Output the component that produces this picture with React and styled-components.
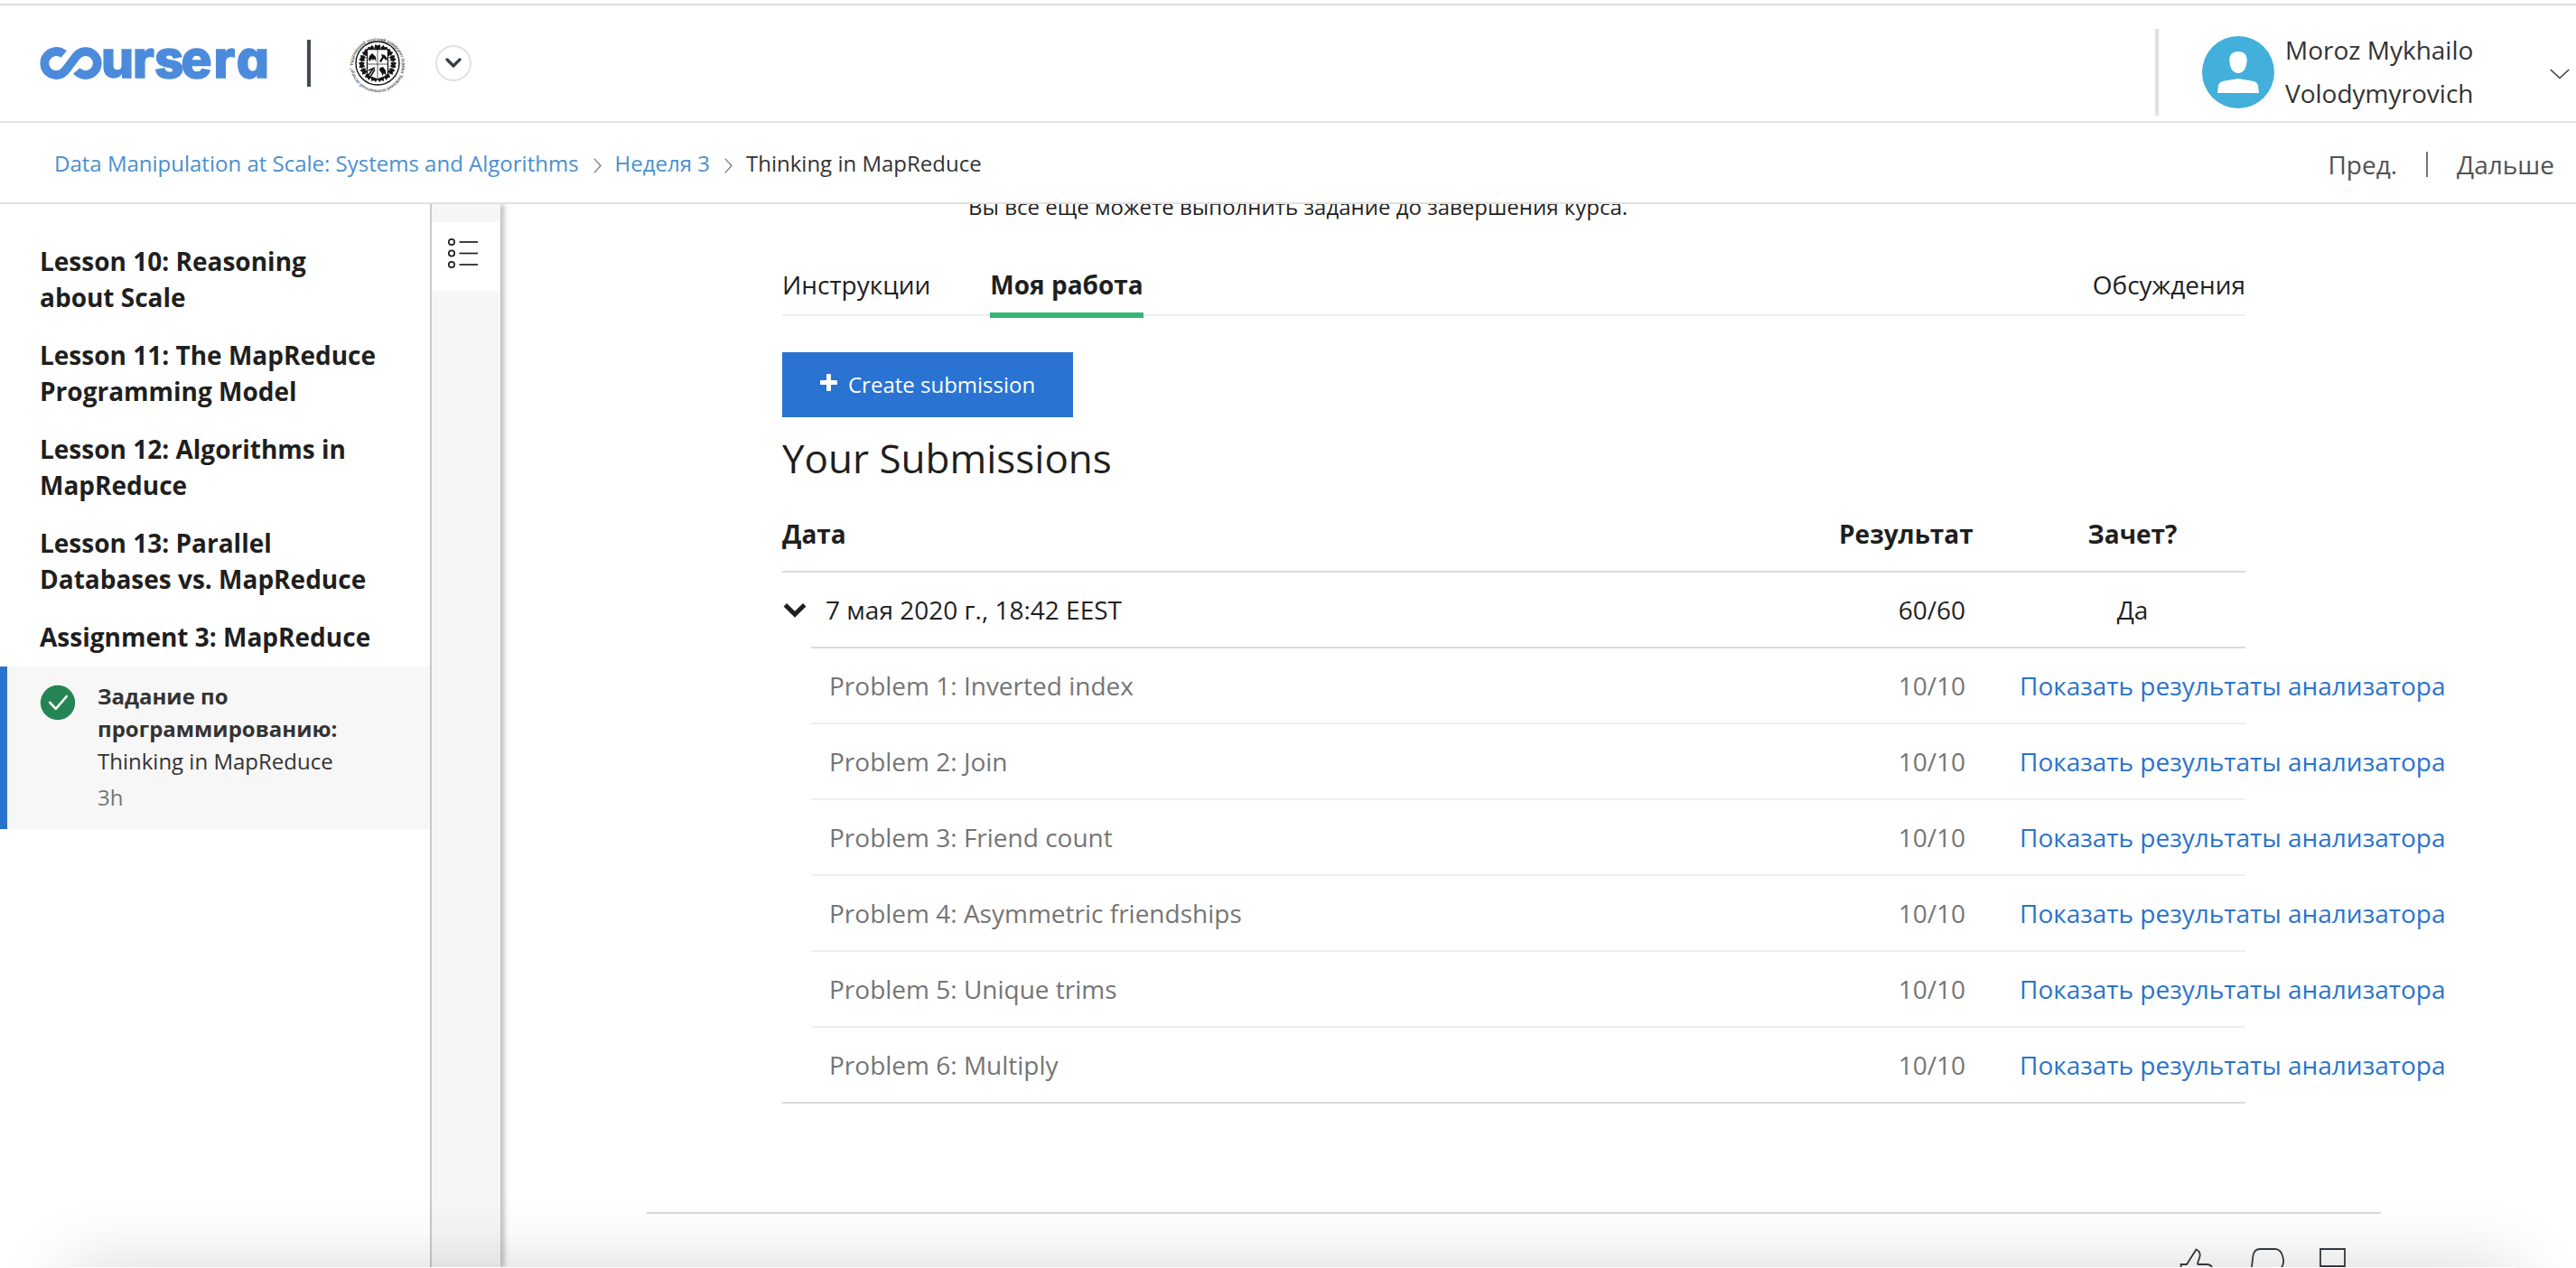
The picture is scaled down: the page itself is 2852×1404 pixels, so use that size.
import React from 'react';
import styled, { createGlobalStyle } from 'styled-components';

const GlobalStyle = createGlobalStyle`
  *, *::before, *::after { box-sizing: border-box; }
  html, body { margin: 0; padding: 0; background: #fff; }
  body {
    font-family: 'Open Sans', 'Noto Sans', sans-serif;
    font-size: 28px;
    color: #1f1f1f;
    overflow: hidden;
  }
  svg { display: block; flex: none; overflow: visible; }
`;

const Page = styled.div`
  width: 100vw;
  height: 100vh;
  display: flex;
  flex-direction: column;
  overflow: hidden;
  padding-top: 4px;
  position: relative;
`;

const Header = styled.header`
  height: 132px;
  flex: none;
  display: flex;
  justify-content: space-between;
  border-top: 2px solid #dcdde1;
  border-bottom: 2px solid #e1e1e1;
`;

const Brand = styled.div`
  display: flex;
  align-items: center;
  height: 128px;
  padding-left: 44px;
`;

const Wordmark = styled.text`
  fill: #4c8bdb;
  stroke: #4c8bdb;
  stroke-width: 1.4px;
  font-family: Inter, sans-serif;
  font-size: 57px;
  font-weight: 800;
  font-feature-settings: 'cv11';
`;

const BrandDivider = styled.span`
  width: 4px;
  height: 52px;
  margin: 0 42px 0 42px;
  background: #434953;
`;

const RoundButton = styled.button`
  display: flex;
  align-items: center;
  justify-content: center;
  width: 40px;
  height: 40px;
  margin-left: 32px;
  padding: 0;
  border: 2px solid #e1e1e1;
  border-radius: 50%;
  background: #fff;
`;

const Account = styled.div`
  display: flex;
  width: 466px;
  padding-top: 26px;
`;

const AccountInner = styled.div`
  display: flex;
  width: 100%;
  height: 96px;
  border-left: 4px solid #e1e1e1;
  padding: 0 7px 0 48px;
`;

const Avatar = styled.div`
  width: 80px;
  height: 80px;
  margin-top: 8px;
  flex: none;
  border-radius: 50%;
  background: #43afdb;
  overflow: hidden;
`;

const AccountName = styled.div`
  flex: 1;
  margin: -1px 0 0 12px;
  line-height: 48px;
  color: #333;
`;

const AccountCaret = styled.div`
  padding-top: 44px;
`;

const CrumbBar = styled.nav`
  height: 90px;
  flex: none;
  display: flex;
  justify-content: space-between;
  border-bottom: 2px solid #e1e1e1;
`;

const Crumbs = styled.div`
  display: flex;
  align-items: center;
  padding: 0 0 0 60px;
  font-size: 24px;
  height: 89px;
  color: #333;
  white-space: nowrap;
`;

const CrumbLink = styled.a`
  color: #4a90d0;
`;

const CrumbArrow = styled.span`
  width: 40px;
  padding: 6px 0 0 16px;
`;

const Pager = styled.div`
  display: flex;
  align-items: center;
  height: 91px;
  padding-right: 24px;
  color: #525252;
`;

const PagerDivider = styled.span`
  width: 2px;
  height: 28px;
  margin: 0 32px;
  background: #757575;
`;

const Body = styled.div`
  flex: 1;
  min-height: 0;
  display: flex;
  overflow: hidden;
`;

const Sidebar = styled.aside`
  width: 478px;
  flex: none;
  padding-top: 43px;
  border-right: 2px solid #c9c9c9;
`;

const Lesson = styled.h3`
  margin: 0 0 24px;
  padding: 0 44px;
  font-size: 28px;
  line-height: 40px;
  font-weight: 700;
  white-space: pre-line;

  &:last-of-type { margin-bottom: 13px; }
`;

const ActiveItem = styled.div`
  display: flex;
  height: 180px;
  padding: 15px 0 0 36px;
  border-left: 8px solid #2a73cc;
  background: #f7f7f7;
`;

const CheckBadge = styled.span`
  display: flex;
  align-items: center;
  justify-content: center;
  width: 40px;
  height: 40px;
  margin: 5px 24px 0 0;
  border-radius: 50%;
`;

const ItemText = styled.div`
  font-size: 24px;
  line-height: 36px;
  color: #333;
  white-space: pre-line;
`;

const Duration = styled.div`
  margin-top: 4px;
  color: #757575;
`;

const Rail = styled.div`
  width: 76px;
  flex: none;
  padding-top: 20px;
  background: #f6f6f6;
  box-shadow: 4px 0 6px rgba(0, 0, 0, 0.26);
  clip-path: inset(0 -14px 0 0);
`;

const RailButton = styled.div`
  display: flex;
  height: 76px;
  padding: 18px 0 0 17px;
  border-radius: 3px;
  background: #fff;
`;

const Main = styled.main`
  flex: 1;
  min-width: 0;
  padding: 0 216px 0 162px;
`;

const Column = styled.section`
  width: 1620px;
  margin: 0 auto 0 150px;
`;

const Notice = styled.p`
  margin: -15px 0 48px 206px;
  font-size: 24px;
  line-height: 36px;
`;

const Tabs = styled.div`
  display: flex;
  height: 55px;
  gap: 66px;
  border-bottom: 2px solid #eee;
`;

const Tab = styled.div`
  position: relative;
  line-height: 40px;
  font-weight: ${(p) => (p.$active ? 700 : 400)};
  margin-left: ${(p) => (p.$end ? 'auto' : 0)};

  &::after {
    content: '';
    display: ${(p) => (p.$active ? 'block' : 'none')};
    position: absolute;
    left: 0;
    right: 0;
    bottom: -4px;
    height: 6px;
    background: #33b574;
  }
`;

const CreateButton = styled.button`
  display: flex;
  align-items: center;
  width: 322px;
  height: 72px;
  margin: 40px 0 15px;
  padding: 0 0 1px 42px;
  gap: 12px;
  border: 0;
  background: #2a73d2;
  color: #fff;
  font: 400 24px/36px 'Open Sans', 'Noto Sans', sans-serif;

  svg { margin-top: -4px; }
`;

const Title = styled.h2`
  margin: 0 0 13px;
  font-size: 44px;
  line-height: 60px;
  font-weight: 400;
`;

const Row = styled.div`
  display: grid;
  grid-template-columns: 1fr 200px 250px;
  align-items: center;
  height: 84px;
  margin-left: ${(p) => (p.$nested ? 32 : 0)}px;
  border-bottom: 2px solid ${(p) => (p.$nested ? '#efefef' : '#dcdcdc')};
  color: ${(p) => (p.$nested ? '#757575' : '#1f1f1f')};
  font-weight: ${(p) => (p.$head ? 700 : 400)};
`;

const SubmissionRow = styled(Row)`
  height: 82px;
  border-bottom: 0;
`;

const Rule = styled.div`
  height: 2px;
  margin-left: 32px;
  background: #dcdcdc;
`;

const DateCell = styled.div`
  display: flex;
  align-items: center;
  gap: 21px;
  padding-left: 1px;
`;

const ProblemList = styled.div`
  border-bottom: 2px solid #dcdcdc;

  & > ${Row}:last-child { height: 82px; border-bottom: 0; }
`;

const ProblemName = styled.div`
  padding-left: 20px;
`;

const Score = styled.div`
  padding-right: 60px;
  text-align: right;
`;

const Passed = styled.div`
  text-align: center;
`;

const ReportLink = styled.a`
  color: #2a73cc;
  white-space: nowrap;
`;

const Footer = styled.footer`
  width: 1920px;
  height: 62px;
  margin-top: 120px;
  padding: 37px 0 0 1697px;
  border-top: 2px solid #dcdcdc;
`;

const BottomShade = styled.div`
  position: absolute;
  left: 76px;
  right: 66px;
  bottom: -119px;
  height: 120px;
  background: #fff;
  box-shadow: 0 0 80px rgba(0, 0, 0, 0.16);
  pointer-events: none;
`;

const Logo = () => (
  <svg width="254" height="40" viewBox="0 0 254 40" fill="none">
    <path
      d="M26.7 10.1A13 13 0 1 0 28.7 27.8L40.4 12.2A13 13 0 1 1 40.8 28.4"
      stroke="#4c8bdb"
      strokeWidth="9.8"
    />
    <Wordmark x="68" y="35.8" dx="0 -1 0 -3 2 3" textLength="186" lengthAdjust="spacingAndGlyphs">
      ursera
    </Wordmark>
  </svg>
);

const leafAngles = [0, 24, 48, 72, 96, 120, 145, 168, 192, 215, 240, 264, 288, 312, 336];

const Seal = () => (
  <svg width="64" height="64" viewBox="-32 -32 64 64">
    <defs>
      <path id="seal-ring" d="M-27 2A27 27 0 1 1 -27 2.4" />
    </defs>
    <text fontSize="5.2" fontWeight="600" fill="#333" fontFamily="'Open Sans', sans-serif">
      <textPath href="#seal-ring" textLength="166" lengthAdjust="spacingAndGlyphs">
        Національний технічний університет України “Київський політехнічний інститут”
      </textPath>
    </text>
    <circle r="24" fill="none" stroke="#111" strokeWidth="1.4" />
    {leafAngles.map((a) => (
      <path key={a} transform={`rotate(${a})`} d="M-3.500 -17.500L-2.500 -21L0 -19.500L2.500 -21L3.500 -17.500L2 -14L0 -15.500L-2 -14Z" fill="#161616" />
    ))}
    <path d="M-11.500 -15.500H11.500V11C11.500 15 5 15.500 0 18C-5 15.500 -11.500 15 -11.500 11Z" fill="#fff" stroke="#111" strokeWidth="1.3" />
    <path d="M0 -15.500V18M-11.500 1H11.500" stroke="#333" strokeWidth="0.8" />
    <path d="M-10 -4L-9 -8L-6 -11L-4 -9L-2 -7L-1.500 -2L-4 -5L-5 -3L-7 -5L-8 -2Z" fill="#111" />
    <path d="M2 -2L5 -7L4 -10L8 -9L11 -5L9 -3L7 -6L4 -1Z" fill="#111" />
    <path d="M-10 13L-4 5M-7.500 14L-3 7M-10 8L-3 5" stroke="#111" strokeWidth="1.5" />
    <path d="M2.500 5L6 4L9 8L9.500 14L7 11L5.500 14L4 10L2 8Z" fill="#111" />
  </svg>
);

const Arrow = () => (
  <svg width="9" height="17" viewBox="0 0 9 17" fill="none" stroke="#7b7b7b" strokeWidth="1.3">
    <path d="M0.8 0.6L8 8.5L0.8 16.4" />
  </svg>
);

const lessons = [
  'Lesson 10: Reasoning\nabout Scale',
  'Lesson 11: The MapReduce\nProgramming Model',
  'Lesson 12: Algorithms in\nMapReduce',
  'Lesson 13: Parallel\nDatabases vs. MapReduce',
  'Assignment 3: MapReduce',
];

const problems = [
  'Problem 1: Inverted index',
  'Problem 2: Join',
  'Problem 3: Friend count',
  'Problem 4: Asymmetric friendships',
  'Problem 5: Unique trims',
  'Problem 6: Multiply',
];

export default function App() {
  return (
    <Page>
      <GlobalStyle />
      <Header>
        <Brand>
          <Logo />
          <BrandDivider />
          <Seal />
          <RoundButton>
            <svg width="20" height="12" viewBox="0 0 20 12" fill="none" stroke="#373c44" strokeWidth="3.2" strokeLinecap="round" strokeLinejoin="round">
              <path d="M3 2L10 9L17 2" />
            </svg>
          </RoundButton>
        </Brand>
        <Account>
          <AccountInner>
            <Avatar>
              <svg width="80" height="80" viewBox="0 0 80 80" fill="#fff">
                <path d="M40 17C46.500 17 49.800 20.500 49.700 27C49.400 34 46.500 41 40 41C33.500 41 30.600 34 30.300 27C30.200 20.500 33.500 17 40 17Z" />
                <path d="M17 63L18 55C18.500 52 20.500 50.500 24 49.800L40 47L56 49.800C59.500 50.500 61.500 52 62 55L63 63Z" />
              </svg>
            </Avatar>
            <AccountName>
              Moroz Mykhailo
              <br />
              Volodymyrovich
            </AccountName>
            <AccountCaret>
              <svg width="22" height="12" viewBox="0 0 22 12" fill="none" stroke="#373c44" strokeWidth="1.5">
                <path d="M0.800 1L11 10.500L21.200 1" />
              </svg>
            </AccountCaret>
          </AccountInner>
        </Account>
      </Header>
      <CrumbBar>
        <Crumbs>
          <CrumbLink>Data Manipulation at Scale: Systems and Algorithms</CrumbLink>
          <CrumbArrow><Arrow /></CrumbArrow>
          <CrumbLink>Неделя 3</CrumbLink>
          <CrumbArrow><Arrow /></CrumbArrow>
          <span>Thinking in MapReduce</span>
        </Crumbs>
        <Pager>
          <span>Пред.</span>
          <PagerDivider />
          <span>Дальше</span>
        </Pager>
      </CrumbBar>
      <Body>
        <Sidebar>
          {lessons.map((l) => (
            <Lesson key={l}>{l}</Lesson>
          ))}
          <ActiveItem>
            <CheckBadge>
              <svg width="40" height="40" viewBox="0 0 40 40" fill="none">
                <circle cx="20" cy="20" r="19.200" fill="#258453" />
                <path d="M11.200 19.800L17.800 26.800L29.800 13" stroke="#fff" strokeWidth="2.600" strokeLinecap="round" strokeLinejoin="round" />
              </svg>
            </CheckBadge>
            <ItemText>
              <strong>{'Задание по\nпрограммированию:'}</strong>
              <div>Thinking in MapReduce</div>
              <Duration>3h</Duration>
            </ItemText>
          </ActiveItem>
        </Sidebar>
        <Rail>
          <RailButton>
            <svg width="36" height="34" viewBox="0 0 36 34" fill="none" stroke="#1f1f1f" strokeWidth="1.700">
              {[4, 16.5, 29].map((y) => (
                <g key={y}>
                  <circle cx="5" cy={y} r="3.200" />
                  <path d={`M13.500 ${y}H34`} />
                </g>
              ))}
            </svg>
          </RailButton>
        </Rail>
        <Main>
          <Column>
            <Notice>Вы все еще можете выполнить задание до завершения курса.</Notice>
            <Tabs>
              <Tab>Инструкции</Tab>
              <Tab $active>Моя работа</Tab>
              <Tab $end>Обсуждения</Tab>
            </Tabs>
            <CreateButton>
              <svg width="19" height="19" viewBox="0 0 19 19" fill="#fff">
                <path d="M8 0H11Q12 0 12 1V7H18Q19 7 19 8V11Q19 12 18 12H12V18Q12 19 11 19H8Q7 19 7 18V12H1Q0 12 0 11V8Q0 7 1 7H7V1Q7 0 8 0Z" />
              </svg>
              Create submission
            </CreateButton>
            <Title>Your Submissions</Title>
            <Row $head>
              <div>Дата</div>
              <div>Результат</div>
              <Passed>Зачет?</Passed>
            </Row>
            <SubmissionRow>
              <DateCell>
                <svg width="26" height="17" viewBox="0 0 26 17" fill="none" stroke="#1f1f1f" strokeWidth="5">
                  <path d="M2.300 2.800L13 13.300L23.700 2.800" />
                </svg>
                7 мая 2020 г., 18:42 EEST
              </DateCell>
              <Score>60/60</Score>
              <Passed>Да</Passed>
            </SubmissionRow>
            <Rule />
            <ProblemList>
              {problems.map((p) => (
                <Row key={p} $nested>
                  <ProblemName>{p}</ProblemName>
                  <Score>10/10</Score>
                  <ReportLink>Показать результаты анализатора</ReportLink>
                </Row>
              ))}
            </ProblemList>
          </Column>
          <Footer>
            <svg width="190" height="30" viewBox="0 0 190 30" fill="none" stroke="#373c44" strokeWidth="1.800">
              <path d="M2.500 30L1.500 19H8L18.500 2.500C22.500 4.500 23.500 8 22 12L20 18Q20 19 21 19H30C34 19 36 21 36.500 24L37 30" />
              <path d="M79 30L81.500 9C82.500 4 85.500 2 89 2H106C110 2 112 4.500 113.500 8C116 14 115.500 20 112 24L109 30" />
              <path d="M156 30V2H183V30M156 21H183" />
            </svg>
          </Footer>
        </Main>
      </Body>
      <BottomShade />
    </Page>
  );
}
